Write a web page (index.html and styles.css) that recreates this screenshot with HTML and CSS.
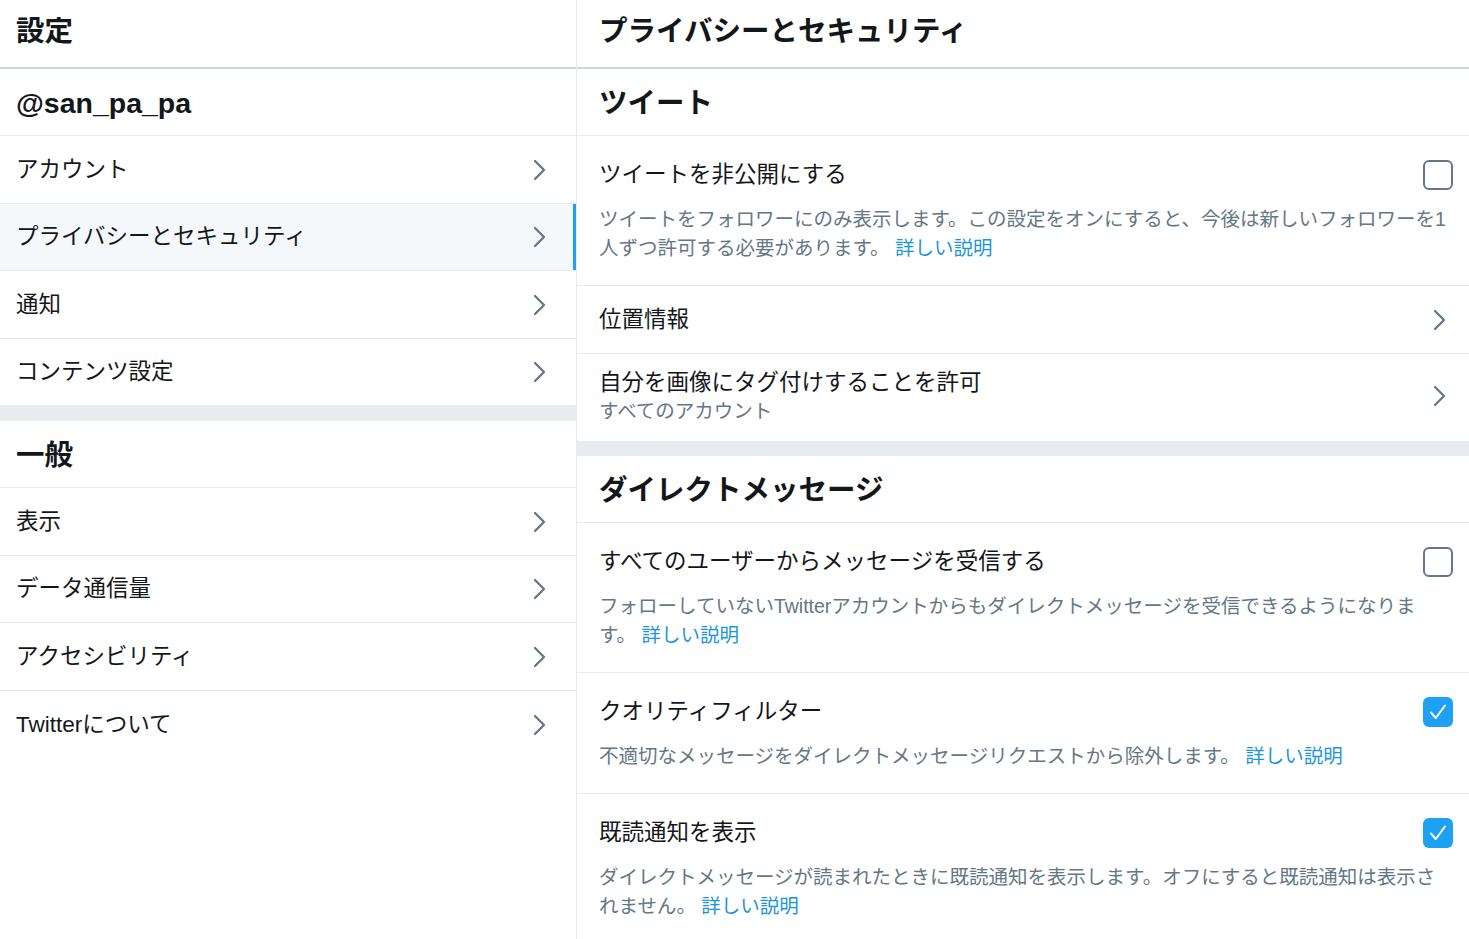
FILE: index.html
```html
<!DOCTYPE html>
<html lang="ja">
<head>
<meta charset="utf-8">
<title>設定 - プライバシーとセキュリティ</title>
<link rel="stylesheet" href="styles.css">
</head>
<body>
<div class="app">
  <aside class="nav">
    <div class="page-header"><h1 class="page-title">設定</h1></div>
    <div class="section-header">@san_pa_pa</div>
    <a class="nav-item" href="#"><span>アカウント</span><svg class="chev" viewBox="0 0 13 22"><polyline points="2,2 11,11 2,20"/></svg></a>
    <a class="nav-item selected" href="#"><span>プライバシーとセキュリティ</span><svg class="chev" viewBox="0 0 13 22"><polyline points="2,2 11,11 2,20"/></svg></a>
    <a class="nav-item" href="#"><span>通知</span><svg class="chev" viewBox="0 0 13 22"><polyline points="2,2 11,11 2,20"/></svg></a>
    <a class="nav-item" href="#"><span>コンテンツ設定</span><svg class="chev" viewBox="0 0 13 22"><polyline points="2,2 11,11 2,20"/></svg></a>
    <div class="gap"></div>
    <div class="section-header">一般</div>
    <a class="nav-item" href="#"><span>表示</span><svg class="chev" viewBox="0 0 13 22"><polyline points="2,2 11,11 2,20"/></svg></a>
    <a class="nav-item" href="#"><span>データ通信量</span><svg class="chev" viewBox="0 0 13 22"><polyline points="2,2 11,11 2,20"/></svg></a>
    <a class="nav-item" href="#"><span>アクセシビリティ</span><svg class="chev" viewBox="0 0 13 22"><polyline points="2,2 11,11 2,20"/></svg></a>
    <a class="nav-item last" href="#"><span>Twitterについて</span><svg class="chev" viewBox="0 0 13 22"><polyline points="2,2 11,11 2,20"/></svg></a>
  </aside>

  <main class="content">
    <div class="page-header right"><h1 class="page-title">プライバシーとセキュリティ</h1></div>
    <div class="section-header right">ツイート</div>

    <div class="setting">
      <div class="setting-row">
        <span class="setting-title">ツイートを非公開にする</span>
        <span class="checkbox"></span>
      </div>
      <p class="setting-desc">ツイートをフォロワーにのみ表示します。この設定をオンにすると、今後は新しいフォロワーを1人ずつ許可する必要があります。 <a class="link" href="#">詳しい説明</a></p>
    </div>

    <a class="link-row" href="#">
      <span class="setting-title">位置情報</span>
      <svg class="chev chev-right" viewBox="0 0 13 22"><polyline points="2,2 11,11 2,20"/></svg>
    </a>

    <a class="link-row tall" href="#">
      <span class="link-text">
        <span class="setting-title">自分を画像にタグ付けすることを許可</span>
        <span class="setting-sub">すべてのアカウント</span>
      </span>
      <svg class="chev chev-right" viewBox="0 0 13 22"><polyline points="2,2 11,11 2,20"/></svg>
    </a>

    <div class="gap"></div>
    <div class="section-header right">ダイレクトメッセージ</div>

    <div class="setting">
      <div class="setting-row">
        <span class="setting-title">すべてのユーザーからメッセージを受信する</span>
        <span class="checkbox"></span>
      </div>
      <p class="setting-desc">フォローしていないTwitterアカウントからもダイレクトメッセージを受信できるようになりま<span class="keep">す。 <a class="link" href="#">詳しい説明</a></span></p>
    </div>

    <div class="setting">
      <div class="setting-row">
        <span class="setting-title">クオリティフィルター</span>
        <span class="checkbox checked"><svg viewBox="0 0 30 30"><polyline points="8,15.5 12.8,21 22,8.5"/></svg></span>
      </div>
      <p class="setting-desc">不適切なメッセージをダイレクトメッセージリクエストから除外します。 <a class="link" href="#">詳しい説明</a></p>
    </div>

    <div class="setting">
      <div class="setting-row">
        <span class="setting-title">既読通知を表示</span>
        <span class="checkbox checked"><svg viewBox="0 0 30 30"><polyline points="8,15.5 12.8,21 22,8.5"/></svg></span>
      </div>
      <p class="setting-desc">ダイレクトメッセージが読まれたときに既読通知を表示します。オフにすると既読通知は表示されません。 <a class="link" href="#">詳しい説明</a></p>
    </div>
  </main>
</div>
</body>
</html>
```

FILE: styles.css
```css
* { box-sizing: border-box; }

html, body {
  margin: 0;
  padding: 0;
  background: #ffffff;
}

body {
  font-family: "Liberation Sans", "Noto Sans CJK JP", sans-serif;
  color: #14171a;
  overflow: hidden;
}

a { text-decoration: none; color: inherit; }

.app {
  display: flex;
  min-height: 100vh;
}

.nav {
  width: 577px;
  flex: 0 0 577px;
  border-right: 1px solid #e6ecf0;
  display: flex;
  flex-direction: column;
}

.content {
  flex: 1;
  display: flex;
  flex-direction: column;
}

.page-header {
  height: 69px;
  border-bottom: 2px solid #ccd6dd;
  display: flex;
  align-items: center;
  padding: 0 16px 5px;
}

.page-title {
  margin: 0;
  font-size: 28.5px;
  font-weight: 700;
  line-height: 34px;
  color: #14171a;
}

.section-header {
  height: 67px;
  border-bottom: 1px solid #e6ecf0;
  display: flex;
  align-items: center;
  padding: 1px 16px 0;
  font-size: 28.5px;
  font-weight: 700;
  line-height: 34px;
  color: #14171a;
}

.page-header.right,
.section-header.right {
  padding-left: 22px;
}

.nav-item {
  height: 67.5px;
  border-bottom: 1px solid #e6ecf0;
  display: flex;
  align-items: center;
  justify-content: space-between;
  padding: 1px 30px 0 16px;
  font-size: 22.5px;
  line-height: 30px;
  color: #14171a;
}

.nav-item.last { border-bottom: none; }

.nav-item.selected {
  background: #f5f8fa;
  box-shadow: inset -3px 0 0 #1da1f2;
}

.chev {
  width: 13px;
  height: 22px;
  flex: 0 0 13px;
  fill: none;
  stroke: #657786;
  stroke-width: 2.3;
  stroke-linecap: round;
  stroke-linejoin: round;
}

.chev-right { margin-right: 7px; }

.gap {
  height: 15px;
  background: #e6ecf0;
  flex: 0 0 15px;
}

.setting {
  padding: 24px 16px 21.5px 22px;
  border-bottom: 1px solid #e6ecf0;
}

.setting-row {
  display: flex;
  align-items: center;
  justify-content: space-between;
  height: 30px;
}

.setting-title {
  font-size: 22.5px;
  line-height: 30px;
  color: #14171a;
}

.setting-desc {
  margin: 15px 0 0;
  font-size: 19.5px;
  line-height: 29.25px;
  color: #657786;
}

.keep { white-space: nowrap; }

.link { color: #1b95e0; }

.checkbox {
  width: 30px;
  height: 30px;
  flex: 0 0 30px;
  border: 2.5px solid #657786;
  border-radius: 6px;
  display: flex;
  align-items: center;
  justify-content: center;
}

.checkbox.checked {
  border: none;
  background: #1da1f2;
}

.checkbox svg {
  width: 30px;
  height: 30px;
  fill: none;
  stroke: #ffffff;
  stroke-width: 2;
  stroke-linecap: round;
  stroke-linejoin: round;
}

.link-row {
  height: 67.5px;
  border-bottom: 1px solid #e6ecf0;
  display: flex;
  align-items: center;
  justify-content: space-between;
  padding: 1px 16px 0 22px;
}

.link-row.tall {
  height: 87.5px;
  padding-top: 14px;
  padding-bottom: 16.5px;
  border-bottom: none;
}

.link-text {
  display: flex;
  flex-direction: column;
}

.setting-sub {
  font-size: 19.5px;
  line-height: 26px;
  color: #657786;
}
```
